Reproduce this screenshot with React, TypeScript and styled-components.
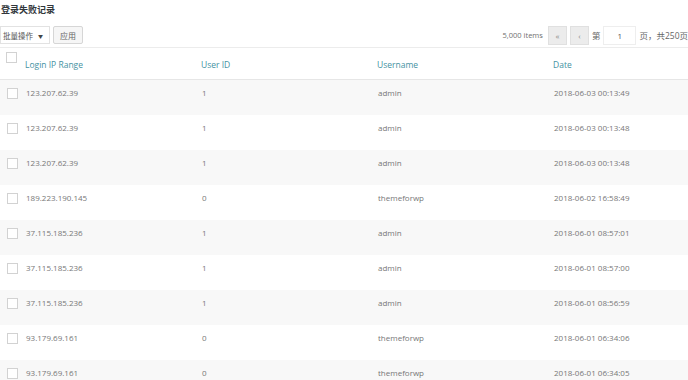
import React, { FC } from 'react';
import styled, { createGlobalStyle } from 'styled-components';

const GlobalStyle = createGlobalStyle`
  body {
    margin: 0;
    background: #fff;
    font-family: "Open Sans", "Noto Sans CJK SC", sans-serif;
    color: #666;
  }
`;

const Page = styled.div`
  width: 688px;
  overflow: hidden;
`;

const Title = styled.h2`
  margin: 0;
  padding: 3px 0 0 1px;
  height: 23px;
  box-sizing: border-box;
  font-size: 9px;
  font-weight: 700;
  color: #32373c;
  line-height: 13px;
`;

const Toolbar = styled.div`
  display: flex;
  justify-content: space-between;
  align-items: center;
  height: 24px;
`;

const Group = styled.div`
  display: flex;
  align-items: center;
  gap: 3px;
`;

const Select = styled.div`
  display: flex;
  align-items: center;
  gap: 5px;
  height: 18px;
  width: 50px;
  box-sizing: border-box;
  padding: 0 4px 0 2px;
  border: 1px solid #e2e2e2;
  background: #fff;
  font-size: 7.5px;
  color: #555;
`;

const Caret = styled.span`
  font-size: 5px;
  color: #444;
`;

const Button = styled.div`
  display: flex;
  align-items: center;
  justify-content: center;
  height: 18px;
  width: 30px;
  box-sizing: border-box;
  border: 1px solid #d6d6d6;
  border-radius: 2px;
  background: #f6f6f6;
  font-size: 8px;
  color: #666;
`;

const Count = styled.span`
  font-size: 7.5px;
  color: #707070;
  margin-right: 2px;
`;

const PageButton = styled.div`
  display: flex;
  align-items: center;
  justify-content: center;
  width: 19px;
  height: 19px;
  box-sizing: border-box;
  border: 1px solid #e0e0e0;
  background: #ececec;
  font-size: 8px;
  color: #8a8a8a;
`;

const PageText = styled.span`
  font-size: 8.5px;
  color: #666;
  white-space: nowrap;
`;

const PageInput = styled.div`
  width: 33px;
  height: 19px;
  box-sizing: border-box;
  border: 1px solid #eee;
  background: #fff;
  display: flex;
  align-items: center;
  justify-content: center;
  font-size: 8px;
  color: #555;
`;

const Table = styled.div`
  border-top: 1px solid #ececec;
`;

const Row = styled.div<{ $striped?: boolean; $head?: boolean }>`
  display: grid;
  grid-template-columns: 20px 176px 176px 176px 1fr;
  height: ${(p) => (p.$head ? '31px' : '35px')};
  background: ${(p) => (p.$striped ? '#f8f8f8' : '#fff')};
  border-bottom: ${(p) => (p.$head ? '1px solid #e6e6e6' : 'none')};
`;

const CheckCell = styled.div<{ $head?: boolean }>`
  padding: ${(p) => (p.$head ? '4px 0 0 6px' : '8px 0 0 7px')};
`;

const Checkbox = styled.span`
  display: block;
  width: 9px;
  height: 9px;
  border: 1px solid #d2d2d2;
  background: #fff;
`;

const Cell = styled.div<{ $head?: boolean }>`
  padding: ${(p) => (p.$head ? '11px 0 0 5px' : '7px 0 0 6px')};
  font-size: ${(p) => (p.$head ? '8.5px' : '8px')};
  line-height: 11px;
  color: ${(p) => (p.$head ? '#4592a2' : '#777')};
  white-space: nowrap;
`;

const rows: [string, string, string, string][] = [
  ['123.207.62.39', '1', 'admin', '2018-06-03 00:13:49'],
  ['123.207.62.39', '1', 'admin', '2018-06-03 00:13:48'],
  ['123.207.62.39', '1', 'admin', '2018-06-03 00:13:48'],
  ['189.223.190.145', '0', 'themeforwp', '2018-06-02 16:58:49'],
  ['37.115.185.236', '1', 'admin', '2018-06-01 08:57:01'],
  ['37.115.185.236', '1', 'admin', '2018-06-01 08:57:00'],
  ['37.115.185.236', '1', 'admin', '2018-06-01 08:56:59'],
  ['93.179.69.161', '0', 'themeforwp', '2018-06-01 06:34:06'],
  ['93.179.69.161', '0', 'themeforwp', '2018-06-01 06:34:05'],
];

const headers = ['Login IP Range', 'User ID', 'Username', 'Date'];

const App: FC = () => (
  <Page>
    <GlobalStyle />
    <Title>登录失败记录</Title>
    <Toolbar>
      <Group>
        <Select>
          批量操作
          <Caret>▼</Caret>
        </Select>
        <Button>应用</Button>
      </Group>
      <Group>
        <Count>5,000 items</Count>
        <PageButton>«</PageButton>
        <PageButton>‹</PageButton>
        <PageText>第</PageText>
        <PageInput>1</PageInput>
        <PageText>页，共250页</PageText>
      </Group>
    </Toolbar>
    <Table>
      <Row $head>
        <CheckCell $head>
          <Checkbox />
        </CheckCell>
        {headers.map((h) => (
          <Cell $head key={h}>
            {h}
          </Cell>
        ))}
      </Row>
      {rows.map((r, i) => (
        <Row key={i} $striped={i % 2 === 0}>
          <CheckCell>
            <Checkbox />
          </CheckCell>
          {r.map((v, j) => (
            <Cell key={j}>{v}</Cell>
          ))}
        </Row>
      ))}
    </Table>
  </Page>
);

export default App;
